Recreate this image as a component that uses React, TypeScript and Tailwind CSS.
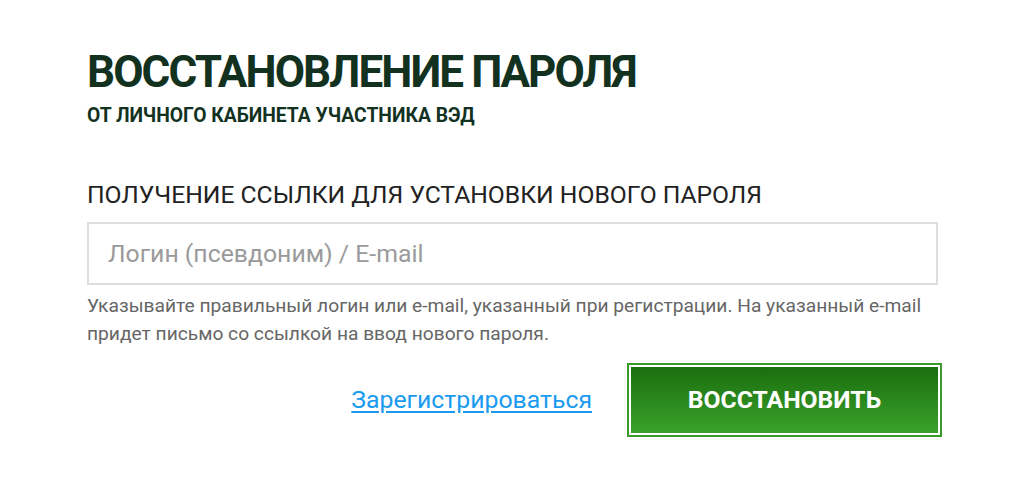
export default function App() {
  return (
    <div className="min-h-screen bg-white font-['Roboto',sans-serif]">
      <div className="w-[942px] pl-[87px] pt-[45px]">
        {/* Header */}
        <h1 className="text-[44px] leading-[54px] font-bold tracking-[-1.9px] text-[#12321f]">
          ВОССТАНОВЛЕНИЕ ПАРОЛЯ
        </h1>
        <p className="mt-[5px] text-[19.3px] leading-[24px] font-bold text-[#12321f]">
          ОТ ЛИЧНОГО КАБИНЕТА УЧАСТНИКА ВЭД
        </p>

        {/* Form */}
        <h2 className="mt-[52px] text-[24.7px] leading-[30px] text-[#222]">
          ПОЛУЧЕНИЕ ССЫЛКИ ДЛЯ УСТАНОВКИ НОВОГО ПАРОЛЯ
        </h2>
        <input
          type="text"
          placeholder="Логин (псевдоним) / E-mail"
          className="mt-[12px] block h-[63px] w-[851px] border-2 border-[#dedede] px-[19px] text-[24.8px] text-[#333] outline-none placeholder:text-[#9a9a9a]"
        />
        <p className="mt-[7px] w-[851px] text-[19.2px] leading-[28px] text-[#666]">
          Указывайте правильный логин или e-mail, указанный при регистрации. На
          указанный e-mail придет письмо со ссылкой на ввод нового пароля.
        </p>

        <div className="mt-[15px] flex items-center justify-end gap-[35px]">
          <a
            href="#"
            className="text-[24.8px] text-[#1a9bf0] underline underline-offset-[3px]"
          >
            Зарегистрироваться
          </a>
          <button className="h-[74px] w-[315px] border-2 border-[#3a9a2c] p-[2px]">
            <span className="flex h-full w-full items-center justify-center bg-gradient-to-b from-[#1b6e0f] to-[#3aa22a] text-[24.7px] font-bold text-white">
              ВОССТАНОВИТЬ
            </span>
          </button>
        </div>
      </div>
    </div>
  );
}
